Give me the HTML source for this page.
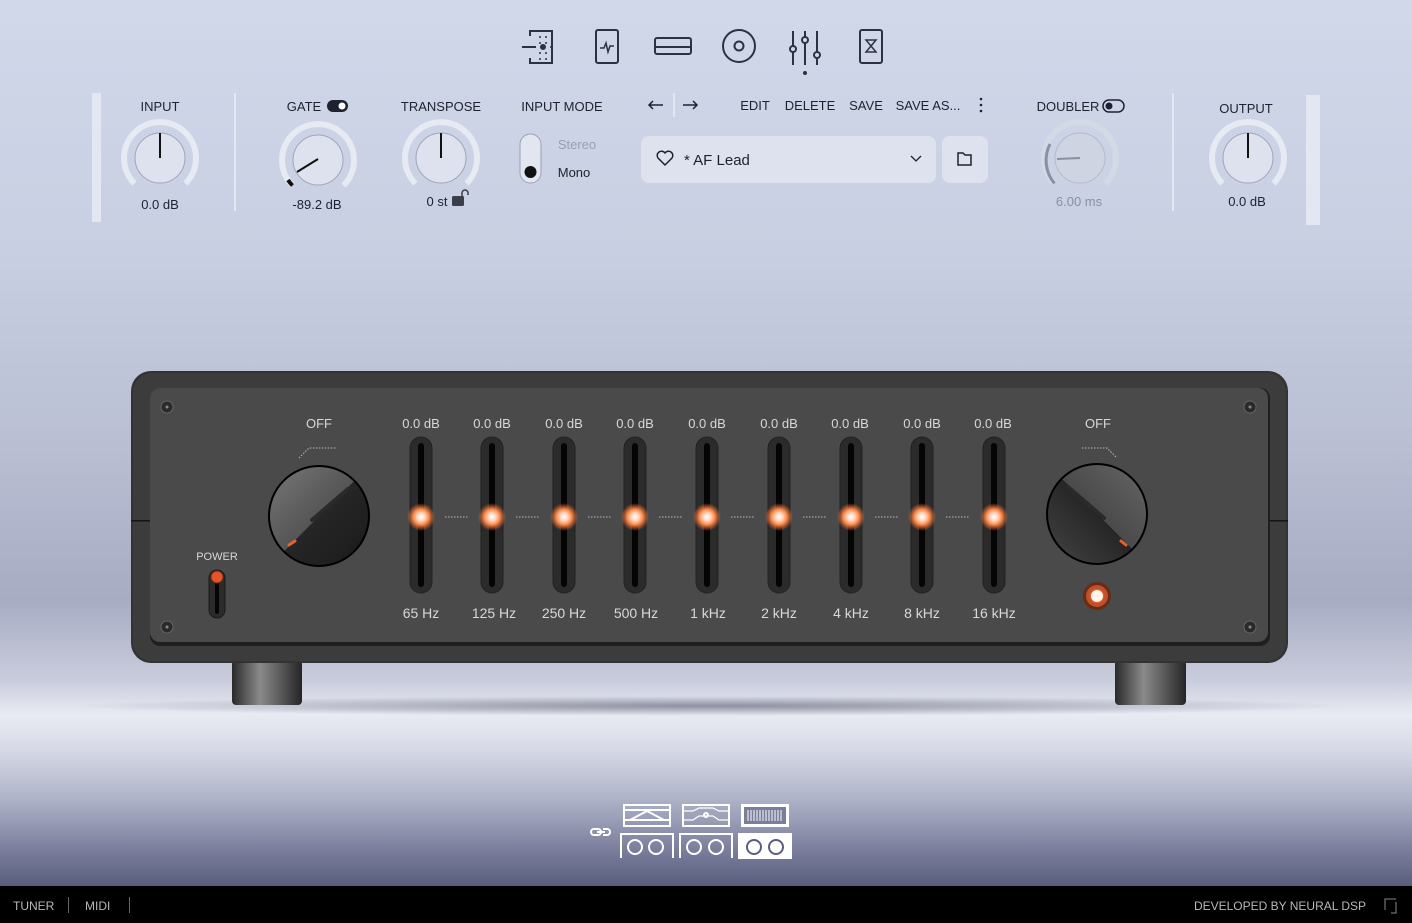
<!DOCTYPE html>
<html><head><meta charset="utf-8"><style>
html,body{margin:0;padding:0;width:1412px;height:923px;overflow:hidden;font-family:"Liberation Sans",sans-serif}
#bg{position:absolute;left:0;top:0;width:1412px;height:886px;background:linear-gradient(180deg,#d0d8ea 0px,#c8cfe2 250px,#b9bed3 450px,#a8acc3 600px,#c9ccdc 680px,#e9ebf3 715px,#d6d9e6 750px,#aeb2c7 800px,#7a7e9c 850px,#5a5e7e 886px)}
#bar{position:absolute;left:0;top:886px;width:1412px;height:37px;background:#000}
svg{position:absolute;left:0;top:0}
</style></head><body>
<div id="bg"></div><div id="bar"></div>
<svg width="1412" height="923" viewBox="0 0 1412 923" font-family="Liberation Sans, sans-serif">
<defs>
<radialGradient id="glow" cx="50%" cy="50%" r="50%"><stop offset="0" stop-color="#fff"/><stop offset="0.3" stop-color="#ffd2b8"/><stop offset="0.55" stop-color="#ff8a4a"/><stop offset="1" stop-color="#ff6a2a" stop-opacity="0"/></radialGradient>
<linearGradient id="foot" x1="0" x2="1"><stop offset="0" stop-color="#2a2a2a"/><stop offset="0.4" stop-color="#8a8a8a"/><stop offset="0.6" stop-color="#6a6a6a"/><stop offset="1" stop-color="#252525"/></linearGradient>
<linearGradient id="kn" x1="0" y1="0" x2="1" y2="1"><stop offset="0" stop-color="#777"/><stop offset="0.5" stop-color="#555"/><stop offset="0.5" stop-color="#262626"/><stop offset="1" stop-color="#1a1a1a"/></linearGradient>
<linearGradient id="kn2" x1="1" y1="0" x2="0" y2="1"><stop offset="0" stop-color="#666"/><stop offset="0.5" stop-color="#4a4a4a"/><stop offset="0.5" stop-color="#262626"/><stop offset="1" stop-color="#444"/></linearGradient>
<radialGradient id="shadow" cx="50%" cy="50%" r="50%"><stop offset="0" stop-color="#3a3d55" stop-opacity="0.5"/><stop offset="1" stop-color="#3a3d55" stop-opacity="0"/></radialGradient>
</defs>

<g fill="none" stroke="#2e3140" stroke-width="2">
<path d="M530 36v-5h22v32h-22v-5"/><path d="M522 47h14" /><circle cx="543" cy="47" r="2" fill="#2e3140"/>
<path d="M540 36v2M546 36v2M540 42v2M546 42v2M550 47h2M546 52v2M540 52v2M540 58v2M546 58v2" stroke-width="1.5"/>
<rect x="596" y="30" width="22" height="33" rx="2"/><path d="M600 48h4l2-5 2 9 2-6h4" stroke-width="1.5"/>
<rect x="655" y="38" width="36" height="16" rx="2"/><path d="M655 47h36"/>
<circle cx="739" cy="46" r="16"/><circle cx="739" cy="46" r="4.5"/>
<path d="M793 31v34M805 31v34M817 31v34"/><circle cx="793" cy="49" r="3" fill="#d0d8ea"/><circle cx="805" cy="40" r="3" fill="#d0d8ea"/><circle cx="817" cy="55" r="3" fill="#d0d8ea"/>
<rect x="860" y="30" width="22" height="33" rx="2"/><path d="M866 40h10l-10 12h10z" stroke-width="1.5"/>
</g>
<circle cx="805" cy="73" r="2" fill="#2e3140"/>

<rect x="92" y="93" width="9" height="129" fill="#e3e7f1"/>
<rect x="1306" y="95" width="14" height="130" fill="#e3e7f1"/>
<rect x="234" y="93" width="2" height="118" fill="#e3e7f1"/>
<rect x="1172" y="93" width="2" height="118" fill="#e3e7f1"/>
<rect x="673" y="93" width="2" height="24" fill="#e3e7f1"/>

<g font-size="13" fill="#1e2130" text-anchor="middle" font-weight="bold" style="font-weight:500">
<text x="160" y="111">INPUT</text>
<text x="304" y="111">GATE</text>
<text x="441" y="111">TRANSPOSE</text>
<text x="562" y="111">INPUT MODE</text>
<text x="1068" y="111">DOUBLER</text>
<text x="1246" y="113">OUTPUT</text>
<text x="160" y="209">0.0 dB</text>
<text x="317" y="209">-89.2 dB</text>
<text x="437" y="206">0 st</text>
<text x="1247" y="206">0.0 dB</text>
<text x="1079" y="206" fill="#8a8fa5">6.00 ms</text>
<text x="755" y="110">EDIT</text>
<text x="810" y="110">DELETE</text>
<text x="866" y="110">SAVE</text>
<text x="928" y="110">SAVE AS...</text>
<text x="577" y="149" fill="#9a9fb3">Stereo</text>
<text x="574" y="177" fill="#1e2130">Mono</text>
</g>
<g fill="#1e2130"><circle cx="981" cy="99" r="1.3"/><circle cx="981" cy="105" r="1.3"/><circle cx="981" cy="111" r="1.3"/></g>
<g stroke="#1e2130" stroke-width="1.5" fill="none"><path d="M649 105h14M653 101l-4 4 4 4"/><path d="M683 105h14M693 101l4 4-4 4"/></g>
<rect x="327" y="100" width="21" height="12" rx="6" fill="#1e2130"/><circle cx="342" cy="106" r="3.5" fill="#fff"/>
<rect x="1103" y="100" width="21" height="12" rx="6" fill="none" stroke="#1e2130" stroke-width="1.5"/><circle cx="1109" cy="106" r="3.5" fill="#1e2130"/>
<rect x="520" y="134" width="21" height="49" rx="10.5" fill="#e2e6f0" stroke="#9aa0b8"/><circle cx="530.5" cy="172" r="6" fill="#111"/>
<g fill="none" stroke-linecap="butt">
<path d="M134.5 183.5 A36 36 0 1 1 185.5 183.5" stroke="#e6eaf3" stroke-width="6"/>
<circle cx="160" cy="158" r="25" fill="#dde2ee" stroke="#9ea4bb"/>
<path d="M160 158V133" stroke="#111" stroke-width="2"/>
<path d="M292.5 185.5 A36 36 0 1 1 343.5 185.5" stroke="#e6eaf3" stroke-width="6"/>
<path d="M292.5 185.5 A36 36 0 0 1 288 180" stroke="#111" stroke-width="4"/>
<circle cx="318" cy="160" r="25" fill="#dde2ee" stroke="#9ea4bb"/>
<path d="M297 172L318 159" stroke="#111" stroke-width="2"/>
<path d="M415.5 183.5 A36 36 0 1 1 466.5 183.5" stroke="#e6eaf3" stroke-width="6"/>
<circle cx="441" cy="158" r="25" fill="#dde2ee" stroke="#9ea4bb"/>
<path d="M441 158V133" stroke="#111" stroke-width="2"/>
<path d="M1054.5 183.5 A36 36 0 1 1 1105.5 183.5" stroke="#d4d9e6" stroke-width="6"/>
<path d="M1054.5 183.5 A36 36 0 0 1 1050 144" stroke="#8a8fa5" stroke-width="3"/>
<circle cx="1080" cy="158" r="25" fill="#cfd4e2" stroke="#b5bacb"/>
<path d="M1057 159L1080 158" stroke="#8a8fa5" stroke-width="2"/>
<path d="M1222.5 183.5 A36 36 0 1 1 1273.5 183.5" stroke="#e6eaf3" stroke-width="6"/>
<circle cx="1248" cy="158" r="25" fill="#dde2ee" stroke="#9ea4bb"/>
<path d="M1248 158V133" stroke="#111" stroke-width="2"/>
</g>
<rect x="452" y="196" width="12" height="10" rx="1.5" fill="#3a3d4a"/><path d="M462 196v-3a3 3 0 0 1 6 0v2" stroke="#3a3d4a" stroke-width="1.5" fill="none"/>
<rect x="641" y="136" width="295" height="47" rx="8" fill="#dde2ee"/>
<rect x="942" y="136" width="46" height="47" rx="8" fill="#dde2ee"/>
<path d="M665 165l-7-7a4 4 0 0 1 7-5 4 4 0 0 1 7 5z" fill="none" stroke="#1e2130" stroke-width="1.5"/>
<text x="684" y="165" font-size="15" fill="#1e2130">* AF Lead</text>
<path d="M911 156l5 5 5-5" fill="none" stroke="#1e2130" stroke-width="1.3"/>
<path d="M958 153h5l2 2h6v10h-13z" fill="none" stroke="#1e2130" stroke-width="1.5"/>

<ellipse cx="710" cy="706" rx="640" ry="10" fill="url(#shadow)"/>
<rect x="232" y="660" width="70" height="45" rx="4" fill="url(#foot)"/>
<rect x="1115" y="660" width="71" height="45" rx="4" fill="url(#foot)"/>
<rect x="131" y="371" width="1157" height="292" rx="20" fill="#333"/>
<rect x="133" y="373" width="1153" height="288" rx="19" fill="#3c3c3c"/>
<rect x="131" y="520" width="20" height="1.5" fill="#151515"/><rect x="1268" y="520" width="20" height="1.5" fill="#151515"/>
<rect x="150" y="388" width="1120" height="258" rx="10" fill="#1f1f1f"/>
<rect x="150" y="388" width="1118" height="254" rx="10" fill="#4a4a4a"/>
<g fill="#2a2a2a" stroke="#666" stroke-width="1"><circle cx="167" cy="407" r="6"/><circle cx="1250" cy="407" r="6"/><circle cx="167" cy="627" r="6"/><circle cx="1250" cy="627" r="6"/></g>
<g fill="#888"><circle cx="167" cy="407" r="1.5"/><circle cx="1250" cy="407" r="1.5"/><circle cx="167" cy="627" r="1.5"/><circle cx="1250" cy="627" r="1.5"/></g>

<g font-size="13" fill="#d8d8d8" text-anchor="middle">
<text x="319" y="428">OFF</text><text x="1098" y="428">OFF</text>
<text x="217" y="560" font-size="11">POWER</text>
<text x="421" y="428">0.0 dB</text><text x="492" y="428">0.0 dB</text><text x="564" y="428">0.0 dB</text><text x="635" y="428">0.0 dB</text><text x="707" y="428">0.0 dB</text><text x="779" y="428">0.0 dB</text><text x="850" y="428">0.0 dB</text><text x="922" y="428">0.0 dB</text><text x="993" y="428">0.0 dB</text>
<text x="421" y="618" font-size="14">65 Hz</text><text x="494" y="618" font-size="14">125 Hz</text><text x="564" y="618" font-size="14">250 Hz</text><text x="636" y="618" font-size="14">500 Hz</text><text x="708" y="618" font-size="14">1 kHz</text><text x="779" y="618" font-size="14">2 kHz</text><text x="851" y="618" font-size="14">4 kHz</text><text x="922" y="618" font-size="14">8 kHz</text><text x="994" y="618" font-size="14">16 kHz</text>
</g>
<g stroke="#bbb" stroke-dasharray="1.5 1.5" fill="none"><path d="M299 458l10-10h27"/><path d="M1082 448h25l10 10"/>
<path d="M445 517h24M516 517h24M588 517h24M659 517h24M731 517h24M803 517h24M875 517h24M946 517h24"/></g>
<g id="sl">
<rect x="410" y="437" width="22" height="156" rx="11" fill="#2b2b2b" stroke="#222"/><rect x="418" y="443" width="6" height="144" rx="3" fill="#050505"/>
</g>
<use href="#sl" x="71"/><use href="#sl" x="143"/><use href="#sl" x="214"/><use href="#sl" x="286"/><use href="#sl" x="358"/><use href="#sl" x="430"/><use href="#sl" x="501"/><use href="#sl" x="573"/>
<g fill="url(#glow)"><circle cx="421" cy="517" r="14"/><circle cx="492" cy="517" r="14"/><circle cx="564" cy="517" r="14"/><circle cx="635" cy="517" r="14"/><circle cx="707" cy="517" r="14"/><circle cx="779" cy="517" r="14"/><circle cx="851" cy="517" r="14"/><circle cx="922" cy="517" r="14"/><circle cx="994" cy="517" r="14"/></g>
<circle cx="319" cy="516" r="50" fill="url(#kn)" stroke="#000" stroke-width="2"/>
<path d="M312 520l36-31" stroke="#2a2a2a" stroke-width="4" stroke-linecap="round"/>
<path d="M289 545l6-4" stroke="#e8602a" stroke-width="3" stroke-linecap="round"/>
<circle cx="1097" cy="514" r="50" fill="url(#kn2)" stroke="#000" stroke-width="2"/>
<path d="M1068 487l36 31" stroke="#2a2a2a" stroke-width="4" stroke-linecap="round"/>
<path d="M1121 541l5 4" stroke="#e8602a" stroke-width="3" stroke-linecap="round"/>
<rect x="209" y="570" width="16" height="48" rx="8" fill="#2b2b2b" stroke="#1a1a1a"/><rect x="215" y="582" width="4" height="32" rx="2" fill="#050505"/>
<circle cx="217" cy="577" r="6" fill="#e5532a" stroke="#7a2a10"/>
<circle cx="1097" cy="596" r="14" fill="#6a2a14"/><circle cx="1097" cy="596" r="11" fill="#c0502a"/><circle cx="1097" cy="596" r="8" fill="url(#glow)"/><circle cx="1097" cy="596" r="6" fill="#fff3ea"/>

<g fill="none" stroke="#fff" stroke-width="2">
<path d="M594 829h4a3 3 0 0 1 0 6h-4a3 3 0 0 1 0-6M603 829h4a3 3 0 0 1 0 6h-4M597 832h8" stroke-width="2"/>
<rect x="624" y="805" width="46" height="21"/><path d="M624 810h46M624 820h46M630 820l17-9 17 9"/>
<rect x="683" y="805" width="46" height="21"/><path d="M683 811h10l6-3h14l6 3h10M683 820h10l6-4h14l6 4h10" stroke-width="1.2"/><circle cx="706" cy="815" r="2"/>
<path d="M621 858v-24h52v24M680 858v-24h52v24"/>
<circle cx="635" cy="847" r="7"/><circle cx="656" cy="847" r="7"/><circle cx="694" cy="847" r="7"/><circle cx="716" cy="847" r="7"/>
</g>
<rect x="741" y="804" width="48" height="23" fill="#fff"/><rect x="744" y="807" width="42" height="17" fill="#7a7e9c"/>
<path d="M748 810v11M751 810v11M754 810v11M757 810v11M760 810v11M763 810v11M766 810v11M769 810v11M772 810v11M775 810v11M778 810v11M781 810v11" stroke="#fff" stroke-width="1"/>
<rect x="738" y="833" width="54" height="26" fill="#fff"/>
<g fill="none" stroke="#5a5e7e" stroke-width="2"><circle cx="754" cy="847" r="7"/><circle cx="776" cy="847" r="7"/></g>

<g font-size="12" fill="#b8b8b8">
<text x="13" y="910">TUNER</text><text x="85" y="910">MIDI</text>
<text x="1366" y="910" text-anchor="end">DEVELOPED BY NEURAL DSP</text>
</g>
<rect x="68" y="897" width="1" height="16" fill="#666"/><rect x="129" y="897" width="1" height="16" fill="#666"/>
<path d="M1385 910v-11h11M1396 902v11h-5" stroke="#888" fill="none"/>
</svg>
</body></html>
